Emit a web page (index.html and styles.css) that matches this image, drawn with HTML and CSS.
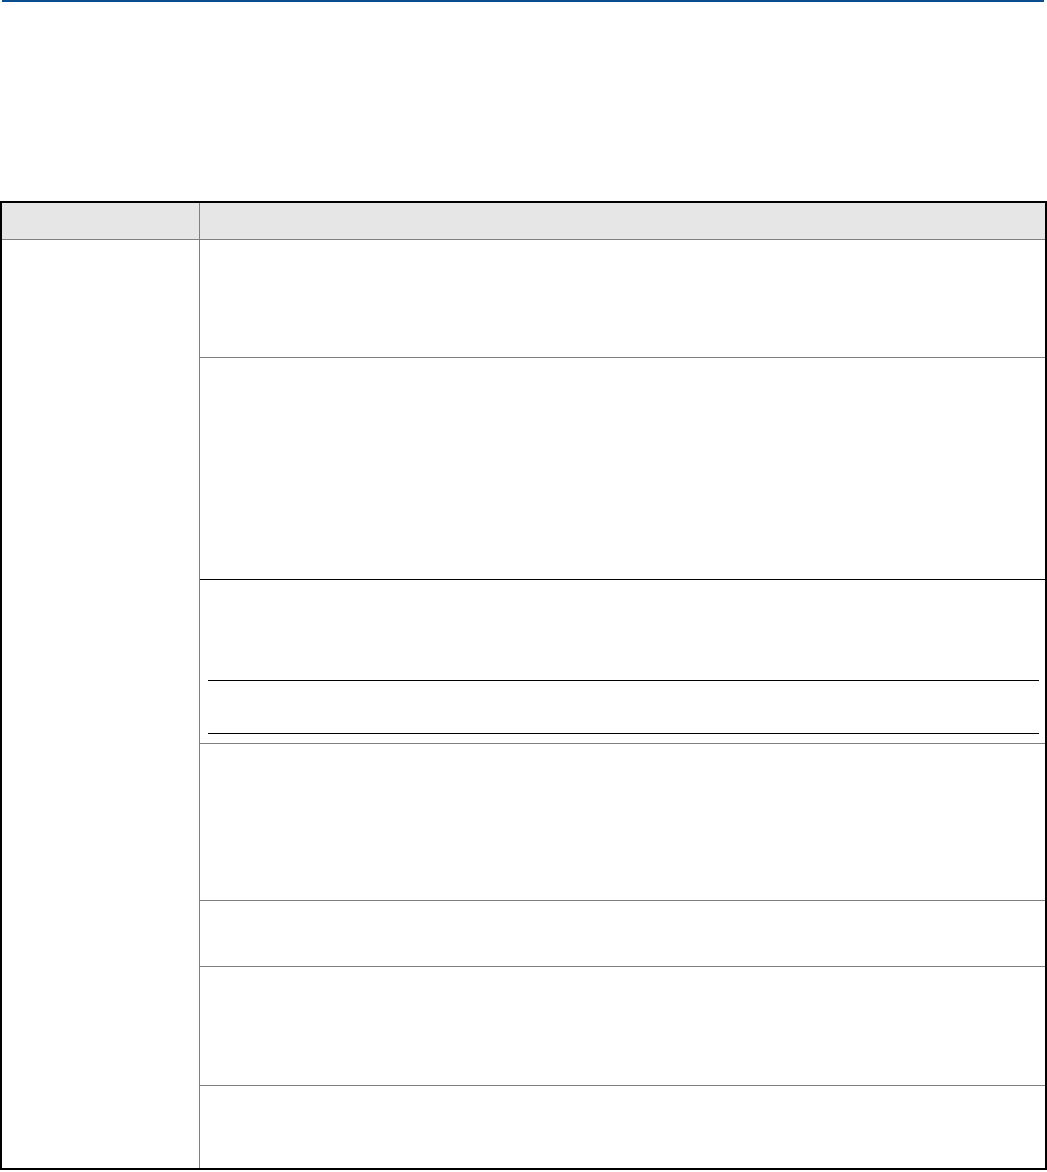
FILE: index.html
```html
<!DOCTYPE html>
<html lang="en">
<head>
    <meta charset="UTF-8">
    <meta name="viewport" content="width=device-width, initial-scale=1.0">
    <title>Table</title>
    <link rel="stylesheet" href="styles.css">
</head>
<body>
    <div class="page-rule"></div>
    <div class="spec-table">
        <div class="table-head">
            <div class="head-cell head-label"></div>
            <div class="head-cell"></div>
        </div>
        <div class="table-body">
            <div class="label-cell"></div>
            <div class="rows">
                <div class="row row-1"></div>
                <div class="row row-2 row-dark"></div>
                <div class="row row-3">
                    <div class="note-rule"></div>
                    <div class="note-body"></div>
                    <div class="note-rule"></div>
                </div>
                <div class="row row-4"></div>
                <div class="row row-5"></div>
                <div class="row row-6"></div>
                <div class="row row-7"></div>
            </div>
        </div>
    </div>
</body>
</html>
```

FILE: styles.css
```css
* {
    box-sizing: border-box;
}
body {
    font-family: 'Liberation Sans', Arial, sans-serif;
    margin: 0;
    background-color: #fff;
    color: #000;
}
.page-rule {
    height: 2px;
    width: 1042px;
    margin-left: 2px;
    background-color: #0a4d8c;
}
.spec-table {
    width: 1047px;
    margin-top: 199px;
    border: 2px solid #000;
}
.table-head {
    display: grid;
    grid-template-columns: 198px 1fr;
    height: 37px;
    background-color: #e6e6e6;
    border-bottom: 1px solid #808080;
}
.head-label {
    border-right: 1px solid #808080;
}
.table-body {
    display: grid;
    grid-template-columns: 198px 1fr;
}
.label-cell {
    border-right: 1px solid #808080;
}
.rows {
    display: flex;
    flex-direction: column;
}
.row {
    border-bottom: 1px solid #808080;
}
.row-dark {
    border-bottom-color: #000;
}
.row-1 { height: 118px; }
.row-2 { height: 222px; }
.row-3 {
    height: 164px;
    padding: 100px 6px 0 8px;
}
.row-4 { height: 157px; }
.row-5 { height: 66px; }
.row-6 { height: 119px; }
.row-7 {
    height: 82px;
    border-bottom: none;
}
.note-rule {
    height: 1px;
    background-color: #000;
}
.note-body {
    height: 52px;
}
```
